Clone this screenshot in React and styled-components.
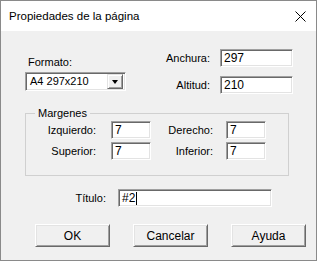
import React from "react";
import styled, { createGlobalStyle, css } from "styled-components";

const Global = createGlobalStyle`
  html, body { margin: 0; padding: 0; background: #f0f0f0; }
  * { box-sizing: border-box; }
`;

const Window = styled.div`
  width: 317px;
  height: 261px;
  border: 1px solid #8a8a8a;
  display: flex;
  flex-direction: column;
  font-family: "Liberation Sans", Arial, sans-serif;
  font-size: 11px;
  color: #000;
  background: #f0f0f0;
  overflow: hidden;
`;

const TitleBar = styled.div`
  height: 30px;
  flex: none;
  background: #fff;
  display: flex;
  align-items: center;
  justify-content: space-between;
  padding: 0 10px 0 8px;
`;

const TitleText = styled.span`
  font-size: 11.5px;
  line-height: 14px;
  color: #000;
`;

const Body = styled.div`
  flex: 1;
  display: flex;
  flex-direction: column;
`;

const TopSection = styled.div`
  display: flex;
  justify-content: space-between;
  align-items: flex-start;
  padding: 18px 23px 0 24px;
`;

const LeftCol = styled.div`
  display: flex;
  flex-direction: column;
  padding-top: 7px;
`;

const Label = styled.span`
  line-height: 13px;
  white-space: nowrap;
  text-align: ${(p) => (p.$right ? "right" : "left")};
  padding-left: ${(p) => p.$pl || 0}px;
  padding-right: ${(p) => p.$pr || 0}px;
  ${(p) => p.$w && `width: ${p.$w}px; flex: none;`}
`;

const sunken = css`
  background: #fff;
  border-top: 1px solid #a0a0a0;
  border-left: 1px solid #a0a0a0;
  border-bottom: 1px solid #fff;
  border-right: 1px solid #fff;
  box-shadow: inset 1px 1px 0 #696969, inset -1px -1px 0 #e3e3e3;
`;

const Combo = styled.div`
  ${sunken};
  margin-top: 3px;
  width: 101px;
  height: 19px;
  display: flex;
  align-items: center;
  justify-content: space-between;
  padding: 1px 2px 1px 4px;
  line-height: 13px;
`;

const ComboButton = styled.div`
  width: 16px;
  height: 15px;
  background: #f0f0f0;
  border-top: 1px solid #e3e3e3;
  border-left: 1px solid #e3e3e3;
  border-bottom: 1px solid #696969;
  border-right: 1px solid #696969;
  box-shadow: inset 1px 1px 0 #fff, inset -1px -1px 0 #a0a0a0;
  display: flex;
  align-items: center;
  justify-content: center;
`;

const Arrow = styled.span`
  width: 0;
  height: 0;
  border-left: 3.5px solid transparent;
  border-right: 3.5px solid transparent;
  border-top: 4px solid #000;
  margin-top: 1px;
`;

const SizeGrid = styled.div`
  display: grid;
  grid-template-columns: auto 73px;
  column-gap: 10px;
  row-gap: 9px;
  align-items: center;
`;

const Input = styled.div`
  ${sunken};
  width: ${(p) => p.$w}px;
  height: 18px;
  padding: 0 2px 0 3px;
  display: flex;
  align-items: center;
  line-height: 13px;
  font-size: 12px;
  white-space: nowrap;
`;

const Caret = styled.span`
  display: inline-block;
  width: 1px;
  height: 13px;
  background: #000;
  margin-left: 1px;
`;

const Group = styled.fieldset`
  margin: 13px 0 0 24px;
  width: 264px;
  padding: 1px 0 15px 0;
  border: 1px solid #d0d0d0;
`;

const Legend = styled.legend`
  margin-left: 9px;
  padding: 0 3px;
  line-height: 13px;
`;

const MarginGrid = styled.div`
  display: grid;
  grid-template-columns: 85px 40px 75px 40px;
  row-gap: 3px;
  align-items: center;
`;

const TitleRow = styled.div`
  display: flex;
  align-items: center;
  margin-top: 13px;
  gap: 12px;
`;

const ButtonRow = styled.div`
  display: flex;
  gap: 23px;
  padding-left: 34px;
  margin-top: 17px;
`;

const Button = styled.div`
  width: 75px;
  height: 23px;
  background: #f0f0f0;
  border-top: 1px solid #fff;
  border-left: 1px solid #fff;
  border-bottom: 1px solid #696969;
  border-right: 1px solid #696969;
  box-shadow: inset 1px 1px 0 #e3e3e3, inset -1px -1px 0 #a0a0a0;
  display: flex;
  align-items: center;
  justify-content: center;
  font-size: 12px;
  line-height: 14px;
`;

function CloseIcon() {
  return (
    <svg width="11" height="11" viewBox="0 0 11 11">
      <path d="M0.5 0.5 L10.5 10.5 M10.5 0.5 L0.5 10.5" stroke="#000" strokeWidth="1" />
    </svg>
  );
}

export default function App() {
  return (
    <>
      <Global />
      <Window>
        <TitleBar>
          <TitleText>Propiedades de la página</TitleText>
          <CloseIcon />
        </TitleBar>
        <Body>
          <TopSection>
            <LeftCol>
              <Label $pl={3}>Formato:</Label>
              <Combo>
                <span>A4 297x210</span>
                <ComboButton>
                  <Arrow />
                </ComboButton>
              </Combo>
            </LeftCol>
            <SizeGrid>
              <Label $right>Anchura:</Label>
              <Input $w={73}>297</Input>
              <Label $right>Altitud:</Label>
              <Input $w={73}>210</Input>
            </SizeGrid>
          </TopSection>
          <Group>
            <Legend>Margenes</Legend>
            <MarginGrid>
              <Label $right $pr={15}>Izquierdo:</Label>
              <Input $w={40}>7</Input>
              <Label $right $pr={13}>Derecho:</Label>
              <Input $w={40}>7</Input>
              <Label $right $pr={15}>Superior:</Label>
              <Input $w={40}>7</Input>
              <Label $right $pr={13}>Inferior:</Label>
              <Input $w={40}>7</Input>
            </MarginGrid>
          </Group>
          <TitleRow>
            <Label $right $w={105}>Título:</Label>
            <Input $w={154}>
              #2<Caret />
            </Input>
          </TitleRow>
          <ButtonRow>
            <Button>OK</Button>
            <Button>Cancelar</Button>
            <Button>Ayuda</Button>
          </ButtonRow>
        </Body>
      </Window>
    </>
  );
}
